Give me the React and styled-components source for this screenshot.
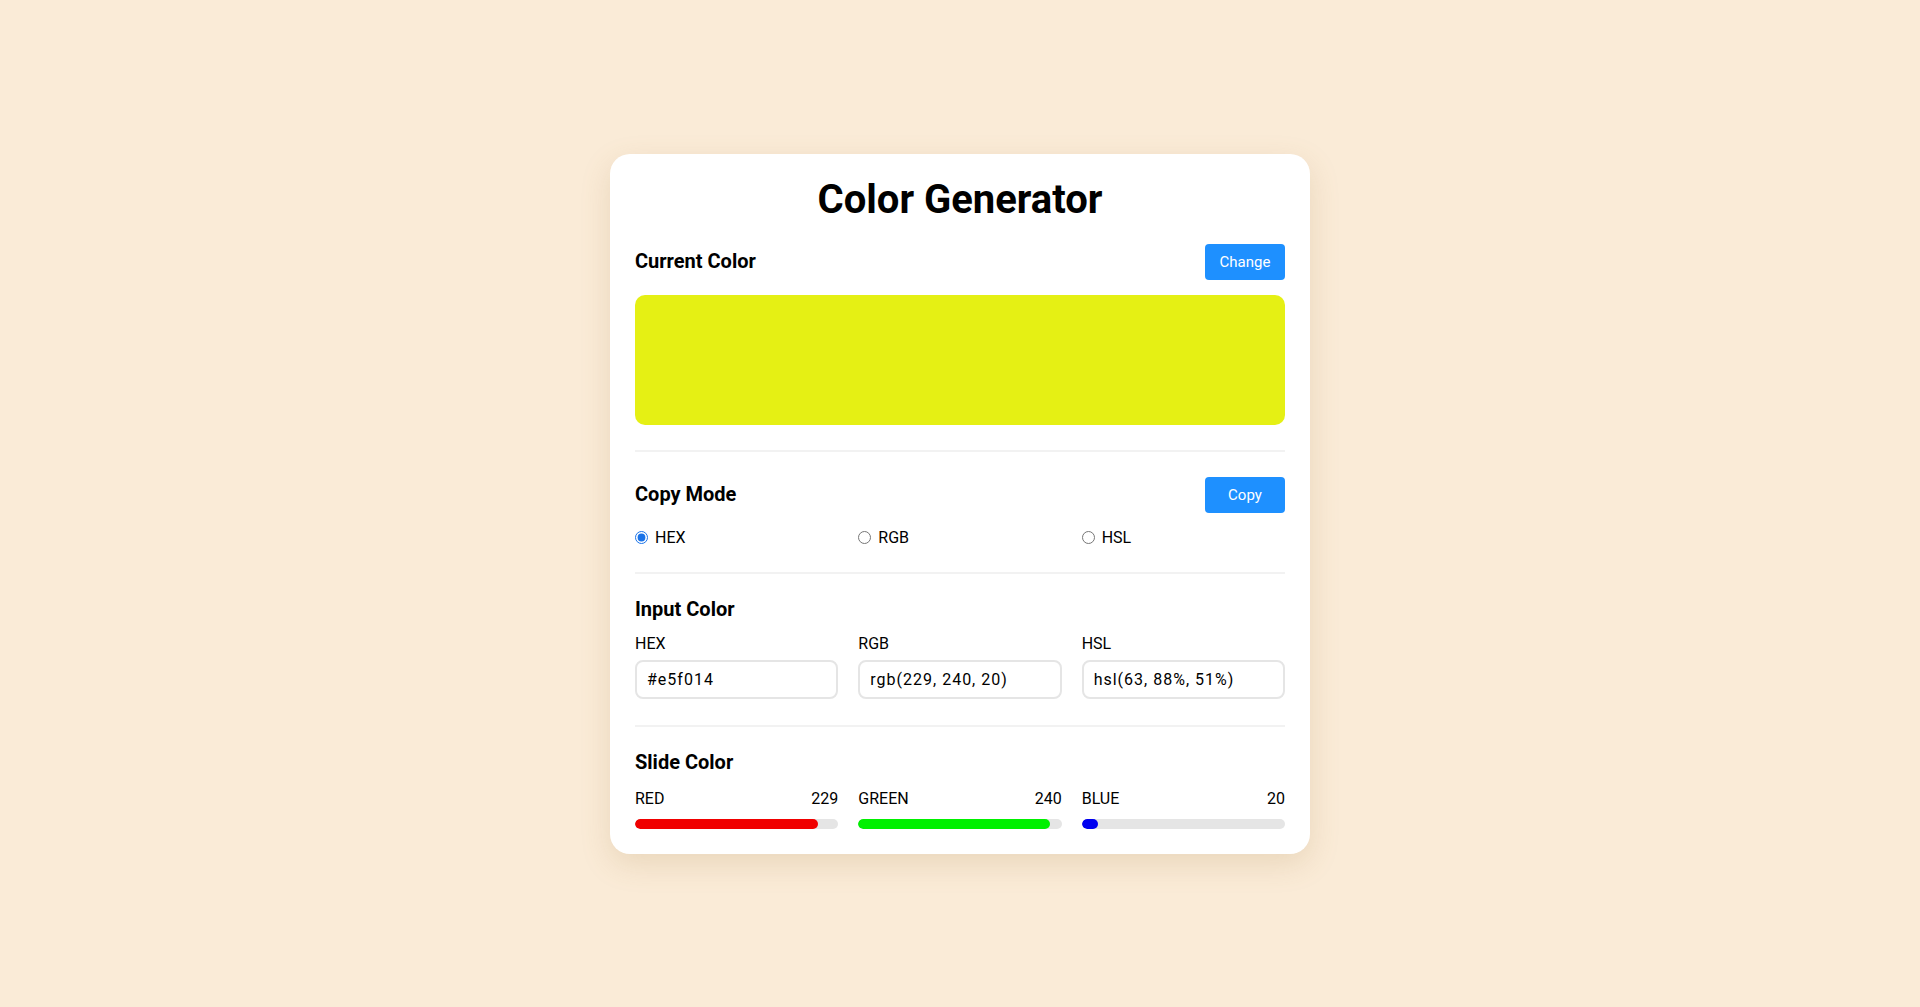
import React, { useState } from "react";
import styled, { createGlobalStyle } from "styled-components";

const Global = createGlobalStyle`
  * { box-sizing: border-box; }
  html, body { margin: 0; padding: 0; }
  body {
    background: #faebd7;
    font-family: Roboto, "Liberation Sans", Arial, sans-serif;
    color: #000;
  }
`;

const Page = styled.div`
  min-height: 1007px;
  display: flex;
  align-items: center;
  justify-content: center;
`;

const Card = styled.div`
  width: 700px;
  background: #fff;
  border-radius: 20px;
  box-shadow: 0 10px 30px rgba(160, 120, 60, 0.18);
  padding: 22px 25px 25px;
`;

const Title = styled.h1`
  margin: 0;
  font-size: 40px;
  font-weight: 700;
  text-align: center;
  line-height: 47px;
`;

const Section = styled.section`
  padding-top: ${(p) => p.$top}px;
  padding-bottom: ${(p) => p.$bottom}px;
  border-bottom: ${(p) => (p.$last ? "none" : "2px solid #f2f2f2")};
`;

const Header = styled.div`
  display: flex;
  align-items: center;
  justify-content: space-between;
  min-height: ${(p) => (p.$tall ? 36 : 23)}px;
`;

const SectionTitle = styled.h2`
  margin: 0;
  font-size: 20px;
  font-weight: 700;
  line-height: 23px;
`;

const Button = styled.button`
  width: 80px;
  height: 36px;
  border: none;
  border-radius: 4px;
  background: #1e90ff;
  color: #fff;
  font-family: Roboto, "Liberation Sans", Arial, sans-serif;
  font-size: 15px;
  font-weight: 400;
  cursor: pointer;
`;

const Swatch = styled.div`
  margin-top: 15px;
  height: 130px;
  border-radius: 10px;
`;

const Grid = styled.div`
  display: grid;
  grid-template-columns: repeat(3, 1fr);
  column-gap: 20px;
  margin-top: ${(p) => p.$top}px;
`;

const RadioLabel = styled.label`
  display: flex;
  align-items: center;
  gap: 7px;
  font-size: 16px;
  line-height: 19px;
  cursor: pointer;
`;

const Radio = styled.input`
  margin: 0;
  width: 13px;
  height: 13px;
  accent-color: #1a73e8;
`;

const Field = styled.div`
  display: flex;
  flex-direction: column;
`;

const FieldLabel = styled.span`
  font-size: 16px;
  line-height: 19px;
  margin-bottom: 7px;
`;

const TextInput = styled.input`
  height: 39px;
  width: 100%;
  border: 2px solid #e5e5e5;
  border-radius: 8px;
  padding: 0 10px;
  font-family: Roboto, "Liberation Sans", Arial, sans-serif;
  font-size: 16px;
  letter-spacing: 1px;
  color: #000;
  outline: none;
`;

const SliderHead = styled.div`
  display: flex;
  justify-content: space-between;
  font-size: 16px;
  line-height: 19px;
  margin-bottom: 11px;
`;

const Track = styled.div`
  height: 10px;
  border-radius: 5px;
  background: #e5e5e5;
  overflow: hidden;
`;

const Fill = styled.div`
  height: 100%;
  border-radius: 5px;
  background: ${(p) => p.$color};
`;

export default function App() {
  const [mode, setMode] = useState("HEX");
  const rgb = { RED: 229, GREEN: 240, BLUE: 20 };
  const colors = { RED: "#f00000", GREEN: "#00f000", BLUE: "#0000f0" };
  return (
    <>
      <Global />
      <Page>
        <Card>
          <Title>Color Generator</Title>
          <Section $top={21} $bottom={25}>
            <Header $tall>
              <SectionTitle>Current Color</SectionTitle>
              <Button>Change</Button>
            </Header>
            <Swatch style={{ background: "#e5f014" }} />
          </Section>
          <Section $top={25} $bottom={25}>
            <Header $tall>
              <SectionTitle>Copy Mode</SectionTitle>
              <Button>Copy</Button>
            </Header>
            <Grid $top={15}>
              {["HEX", "RGB", "HSL"].map((m) => (
                <RadioLabel key={m}>
                  <Radio
                    type="radio"
                    name="mode"
                    checked={mode === m}
                    onChange={() => setMode(m)}
                  />
                  {m}
                </RadioLabel>
              ))}
            </Grid>
          </Section>
          <Section $top={24} $bottom={26}>
            <Header>
              <SectionTitle>Input Color</SectionTitle>
            </Header>
            <Grid $top={13}>
              <Field>
                <FieldLabel>HEX</FieldLabel>
                <TextInput defaultValue="#e5f014" />
              </Field>
              <Field>
                <FieldLabel>RGB</FieldLabel>
                <TextInput defaultValue="rgb(229, 240, 20)" />
              </Field>
              <Field>
                <FieldLabel>HSL</FieldLabel>
                <TextInput defaultValue="hsl(63, 88%, 51%)" />
              </Field>
            </Grid>
          </Section>
          <Section $top={24} $bottom={0} $last>
            <Header>
              <SectionTitle>Slide Color</SectionTitle>
            </Header>
            <Grid $top={15}>
              {Object.keys(rgb).map((k) => (
                <Field key={k}>
                  <SliderHead>
                    <span>{k}</span>
                    <span>{rgb[k]}</span>
                  </SliderHead>
                  <Track>
                    <Fill
                      $color={colors[k]}
                      style={{ width: `${(rgb[k] / 255) * 100}%` }}
                    />
                  </Track>
                </Field>
              ))}
            </Grid>
          </Section>
        </Card>
      </Page>
    </>
  );
}
